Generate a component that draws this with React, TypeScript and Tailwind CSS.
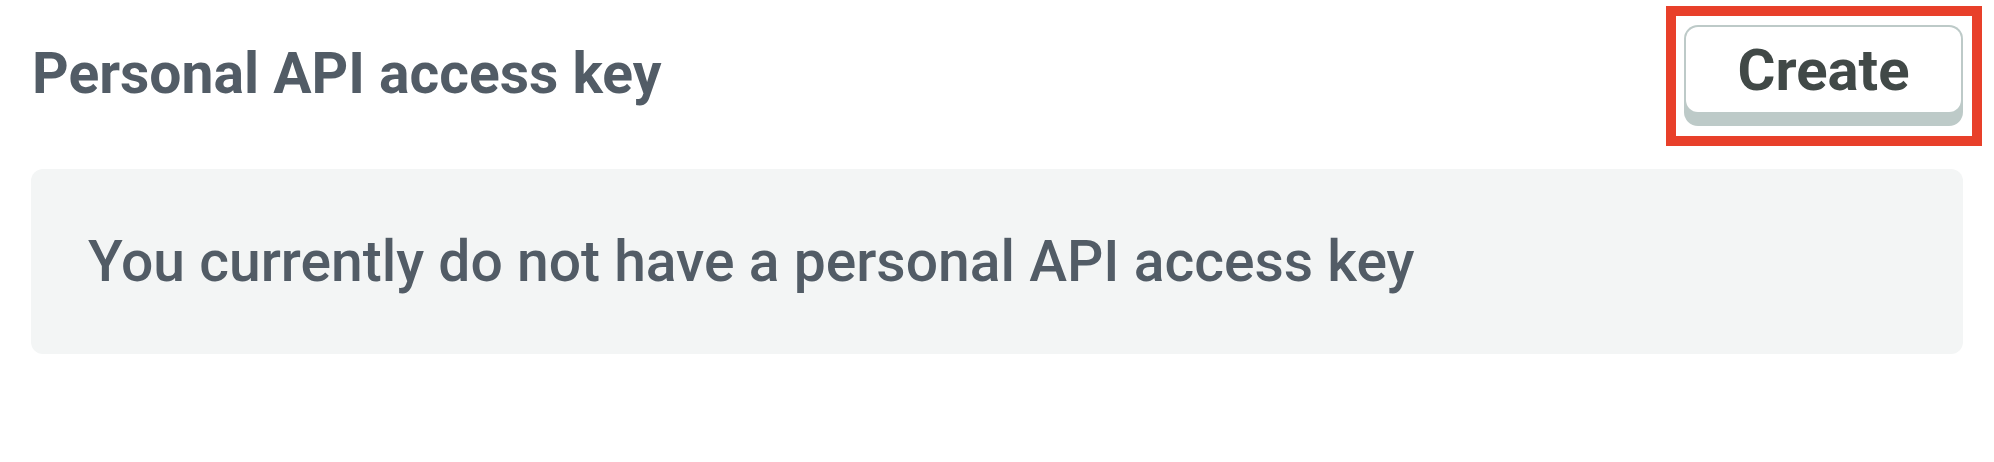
export default function App() {
  return (
    <div className="min-h-[462px] w-full bg-white px-[31px] pt-[25px] font-['Roboto',sans-serif]">
      <div className="flex items-center justify-between">
        <h2 className="-mt-[5px] pl-[1px] text-[57px] font-bold leading-none text-[#525c66]">
          Personal API access key
        </h2>
        <div className="relative">
          <button className="block rounded-[14px] bg-[#bdcac8] p-[2px] pb-[14px]">
            <span className="flex h-[85px] w-[275px] items-center justify-center rounded-[12px] bg-white text-[58px] font-bold leading-none text-[#414947]">
              Create
            </span>
          </button>
          <span className="pointer-events-none absolute -top-[19px] -right-[19px] -bottom-[20px] -left-[18px] border-[10px] border-[#e8402a]" />
        </div>
      </div>
      <div className="mt-[43px] flex h-[185px] items-center rounded-[12px] bg-[#f3f5f5] pl-[57px]">
        <p className="text-[57px] font-medium leading-none text-[#525c66]">
          You currently do not have a personal API access key
        </p>
      </div>
    </div>
  )
}
